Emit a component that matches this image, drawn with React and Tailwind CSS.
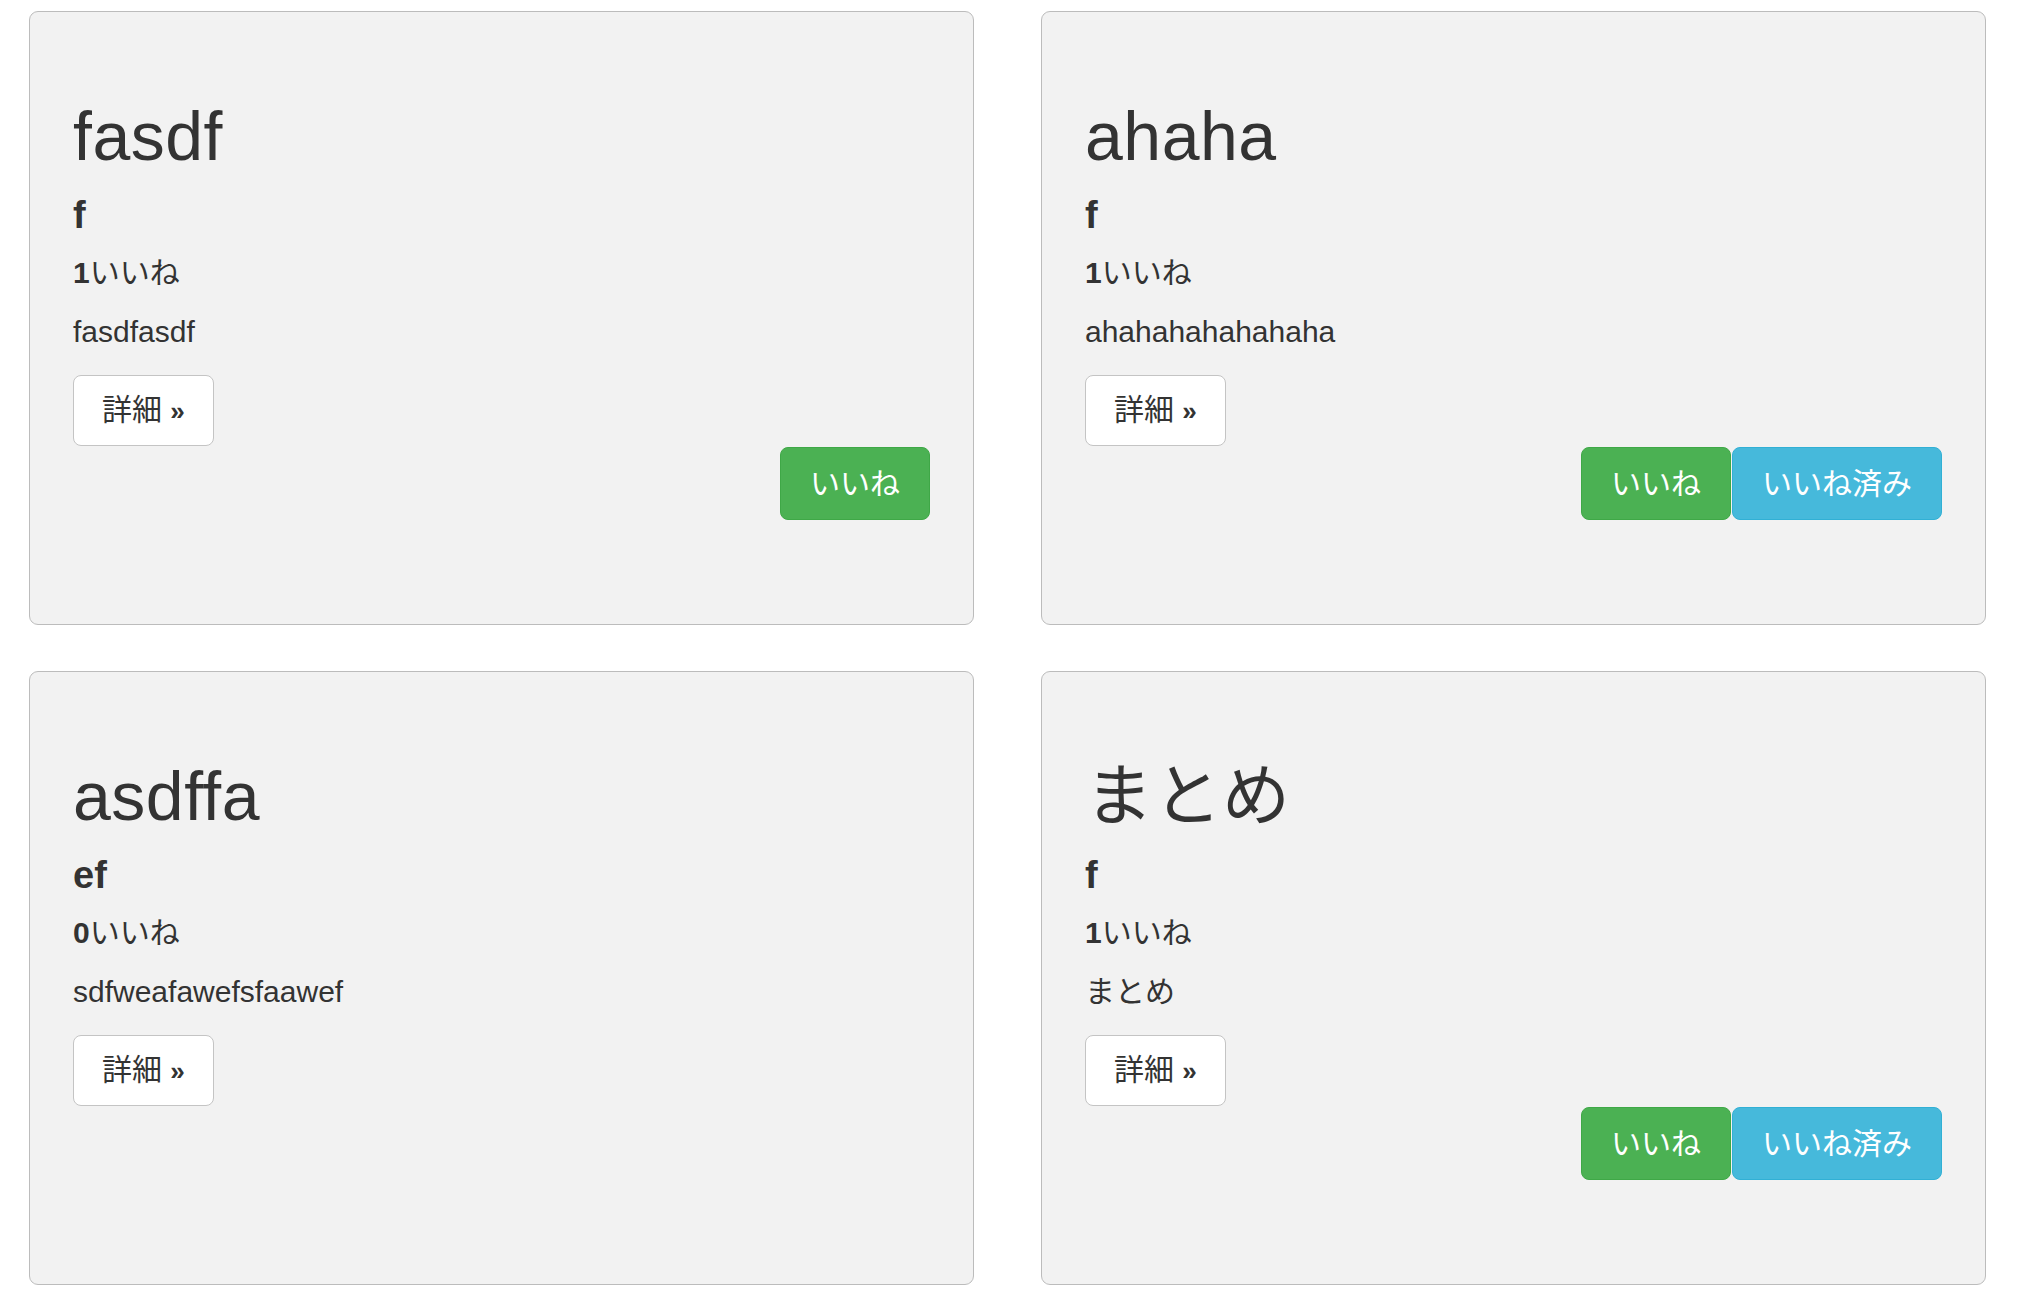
import React from "react";

// Posts shown as a 2x2 grid of cards
const posts = [
  { title: "fasdf", tag: "f", likes: 1, body: "fasdfasdf", liked: false, canLike: true },
  { title: "ahaha", tag: "f", likes: 1, body: "ahahahahahahaha", liked: true, canLike: true },
  { title: "asdffa", tag: "ef", likes: 0, body: "sdfweafawefsfaawef", liked: false, canLike: false },
  { title: "まとめ", tag: "f", likes: 1, body: "まとめ", liked: true, canLike: true },
];

function PostCard({ post }) {
  return (
    <div className="h-[614px] rounded-[9px] border border-[#bcbcbc] bg-[#f2f2f2] px-[43px] pt-[87px]">
      <h1 className="text-[68px] leading-[75px] font-normal tracking-[0.5px]">{post.title}</h1>
      <h4 className="mt-[20px] text-[38px] leading-[42px] font-bold">{post.tag}</h4>
      <p className="mt-[16px] text-[30px] leading-[42px]">
        <b>{post.likes}</b>いいね
      </p>
      <p className="mt-[17px] text-[30px] leading-[42px]">{post.body}</p>
      <div className="mt-[22px]">
        <button className="rounded-[8px] border border-[#c4c4c4] bg-white px-[28px] py-[13px] text-[30px] leading-[42px] text-[#333]">
          詳細 <span className="font-bold text-[26px]">»</span>
        </button>
      </div>

      {post.canLike && (
        <div className="mt-[1px] flex justify-end gap-px">
          <button className="rounded-[8px] border border-[#3fa847] bg-[#4bb153] px-[29px] py-[14px] text-[30px] leading-[43px] text-white">
            いいね
          </button>
          {post.liked && (
            <button className="rounded-[8px] border border-[#31b0d5] bg-[#46b9db] px-[29px] py-[14px] text-[30px] leading-[43px] text-white">
              いいね済み
            </button>
          )}
        </div>
      )}
    </div>
  );
}

export default function App() {
  return (
    <div
      className="min-h-screen bg-white pt-[11px] pl-[29px] text-[#333]"
      style={{ fontFamily: '"Liberation Sans", "Noto Sans CJK JP", sans-serif' }}
    >
      <div className="grid grid-cols-[945px_945px] gap-x-[67px] gap-y-[46px]">
        {posts.map((post, i) => (
          <PostCard key={i} post={post} />
        ))}
      </div>
    </div>
  );
}
